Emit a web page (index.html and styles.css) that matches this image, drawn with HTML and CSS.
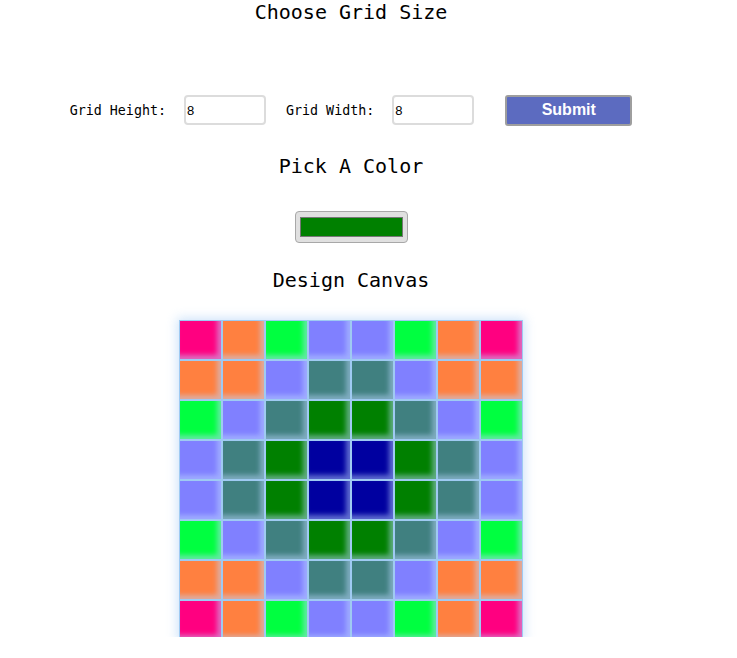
FILE: index.html
```html
<!DOCTYPE html>
<html>
<head>
<meta charset="utf-8">
<title>Pixel Art Maker</title>
<link rel="stylesheet" href="styles.css">
</head>
<body>
<div class="page">
  <h1 class="title">Choose Grid Size</h1>
  <form class="size-form">
    <label class="lbl">Grid Height:</label>
    <input class="num" type="text" value="8">
    <label class="lbl">Grid Width:</label>
    <input class="num" type="text" value="8">
    <button class="submit" type="button">Submit</button>
  </form>
  <h2 class="title pick">Pick A Color</h2>
  <div class="picker"><span class="swatch"></span></div>
  <h2 class="title canvas-title">Design Canvas</h2>
  <div class="grid">
    <span class="c p"></span><span class="c o"></span><span class="c g"></span><span class="c b"></span><span class="c b"></span><span class="c g"></span><span class="c o"></span><span class="c p"></span>
    <span class="c o"></span><span class="c o"></span><span class="c b"></span><span class="c t"></span><span class="c t"></span><span class="c b"></span><span class="c o"></span><span class="c o"></span>
    <span class="c g"></span><span class="c b"></span><span class="c t"></span><span class="c d"></span><span class="c d"></span><span class="c t"></span><span class="c b"></span><span class="c g"></span>
    <span class="c b"></span><span class="c t"></span><span class="c d"></span><span class="c n"></span><span class="c n"></span><span class="c d"></span><span class="c t"></span><span class="c b"></span>
    <span class="c b"></span><span class="c t"></span><span class="c d"></span><span class="c n"></span><span class="c n"></span><span class="c d"></span><span class="c t"></span><span class="c b"></span>
    <span class="c g"></span><span class="c b"></span><span class="c t"></span><span class="c d"></span><span class="c d"></span><span class="c t"></span><span class="c b"></span><span class="c g"></span>
    <span class="c o"></span><span class="c o"></span><span class="c b"></span><span class="c t"></span><span class="c t"></span><span class="c b"></span><span class="c o"></span><span class="c o"></span>
    <span class="c p"></span><span class="c o"></span><span class="c g"></span><span class="c b"></span><span class="c b"></span><span class="c g"></span><span class="c o"></span><span class="c p"></span>
  </div>
</div>
</body>
</html>
```
FILE: styles.css
```css
html, body {
  margin: 0;
  padding: 0;
  background: #fff;
}
.page {
  width: 686px;
  height: 637px;
  margin-left: 8px;
  overflow: hidden;
  display: flex;
  flex-direction: column;
  align-items: center;
  font-family: "DejaVu Sans Mono", monospace;
  color: #000;
}
.page > * {
  flex-shrink: 0;
}
.title {
  font-size: 20px;
  font-weight: normal;
  margin: 0;
  line-height: 24px;
}
.size-form {
  margin-top: 70px;
  display: flex;
  align-items: center;
  height: 32px;
}
.lbl {
  font-size: 13.33px;
  margin-right: 18px;
}
.num {
  width: 82px;
  height: 30px;
  box-sizing: border-box;
  border: 2px solid #dcdcdc;
  border-radius: 4px;
  padding: 0 1px;
  font-family: "Liberation Sans", Arial, sans-serif;
  font-size: 13px;
  margin-right: 20px;
}
.submit {
  margin-left: 11px;
  width: 127px;
  height: 31px;
  background: #5c6bc0;
  color: #fff;
  border: 2px solid #9e9e9e;
  border-radius: 3px;
  font-family: "Liberation Sans", Arial, sans-serif;
  font-weight: bold;
  font-size: 16px;
  padding: 0;
}
.pick {
  margin-top: 28px;
}
.picker {
  margin-top: 33px;
  width: 113px;
  height: 32px;
  box-sizing: border-box;
  background: #e0e0e0;
  border: 1px solid #a8a8a8;
  border-radius: 4px;
  padding: 5px 4px;
  display: flex;
}
.swatch {
  flex: 1;
  background: #008000;
  border: 1px solid #777;
}
.canvas-title {
  margin-top: 25px;
}
.grid {
  margin-top: 28px;
  display: grid;
  grid-template-columns: repeat(8, 41px);
  grid-auto-rows: 38px;
  gap: 2px;
  padding: 1px;
  background: #9fcaf2;
  box-shadow: 0 0 10px 2px rgba(150, 195, 245, 0.45);
}
.c {
  display: block;
  box-shadow: inset -4px -4px 5px rgba(190, 215, 255, 0.5);
}
.p { background: #ff0080; }
.o { background: #ff8040; }
.g { background: #00ff40; }
.b { background: #8080ff; }
.t { background: #408080; }
.d { background: #008000; }
.n { background: #0000a0; }
```
